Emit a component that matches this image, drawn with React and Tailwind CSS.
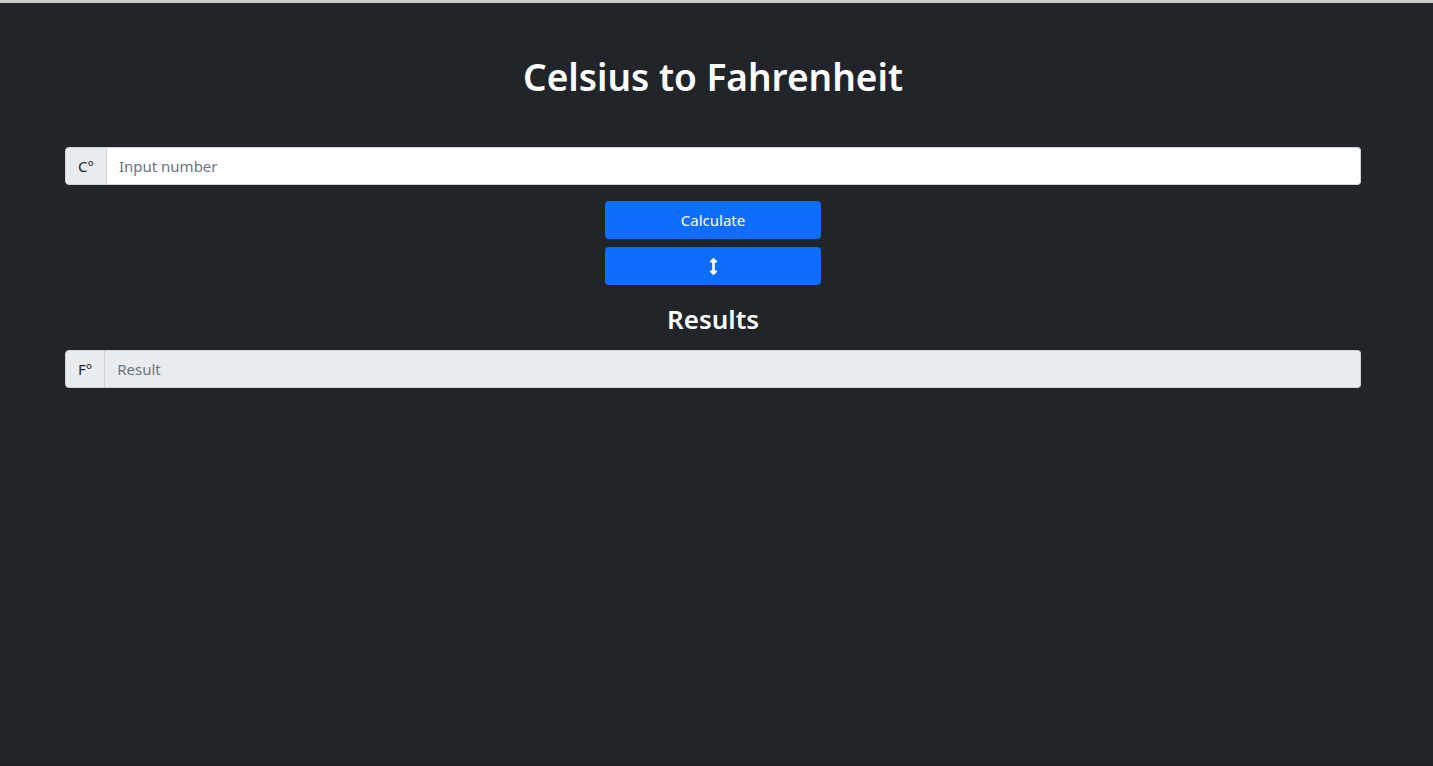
import React, { useState } from 'react';
import { FaArrowsAltV } from 'react-icons/fa';

function InputGroup({ label, placeholder, disabled }) {
  return (
    <div className="flex h-[38px] w-full">
      <span className="flex items-center px-3 bg-[#e9ecef] border border-[#ced4da] rounded-l-[4px] text-[15px] text-[#212529]">
        {label}
      </span>
      <input
        type="text"
        placeholder={placeholder}
        disabled={disabled}
        className={
          'flex-1 min-w-0 px-3 border border-l-0 border-[#ced4da] rounded-r-[4px] text-[15px] text-[#212529] placeholder:text-[#6c757d] outline-none ' +
          (disabled ? 'bg-[#e9ecef]' : 'bg-white')
        }
      />
    </div>
  );
}

export default function App() {
  const [celsius] = useState('');

  return (
    <div
      className="min-h-screen bg-[#212529] border-t-[3px] border-b-2 border-t-[#cdcdcd] border-b-[#1c1f23] pl-[65px] pr-[72px]"
      style={{ fontFamily: '"Noto Sans", "Open Sans", sans-serif' }}
    >
      <h1 className="mt-[50px] h-[48px] leading-[48px] text-[37px] font-semibold text-white text-center">
        Celsius to Fahrenheit
      </h1>

      <div className="mt-[46px]">
        <InputGroup label="C°" placeholder="Input number" />
      </div>

      <div className="flex flex-col items-center mt-4 gap-2">
        <button
          type="button"
          className="w-[216px] h-[38px] rounded-[4px] bg-[#0d6efd] text-white text-[15px]"
        >
          Calculate
        </button>
        <button
          type="button"
          className="w-[216px] h-[38px] rounded-[4px] bg-[#0d6efd] text-white flex items-center justify-center"
        >
          <FaArrowsAltV size={17} />
        </button>
      </div>

      <h3 className="mt-[17px] h-[34px] leading-[34px] text-[26px] font-semibold text-white text-center">
        Results
      </h3>

      <div className="mt-[14px]">
        <InputGroup label="F°" placeholder="Result" disabled value={celsius} />
      </div>
    </div>
  );
}
